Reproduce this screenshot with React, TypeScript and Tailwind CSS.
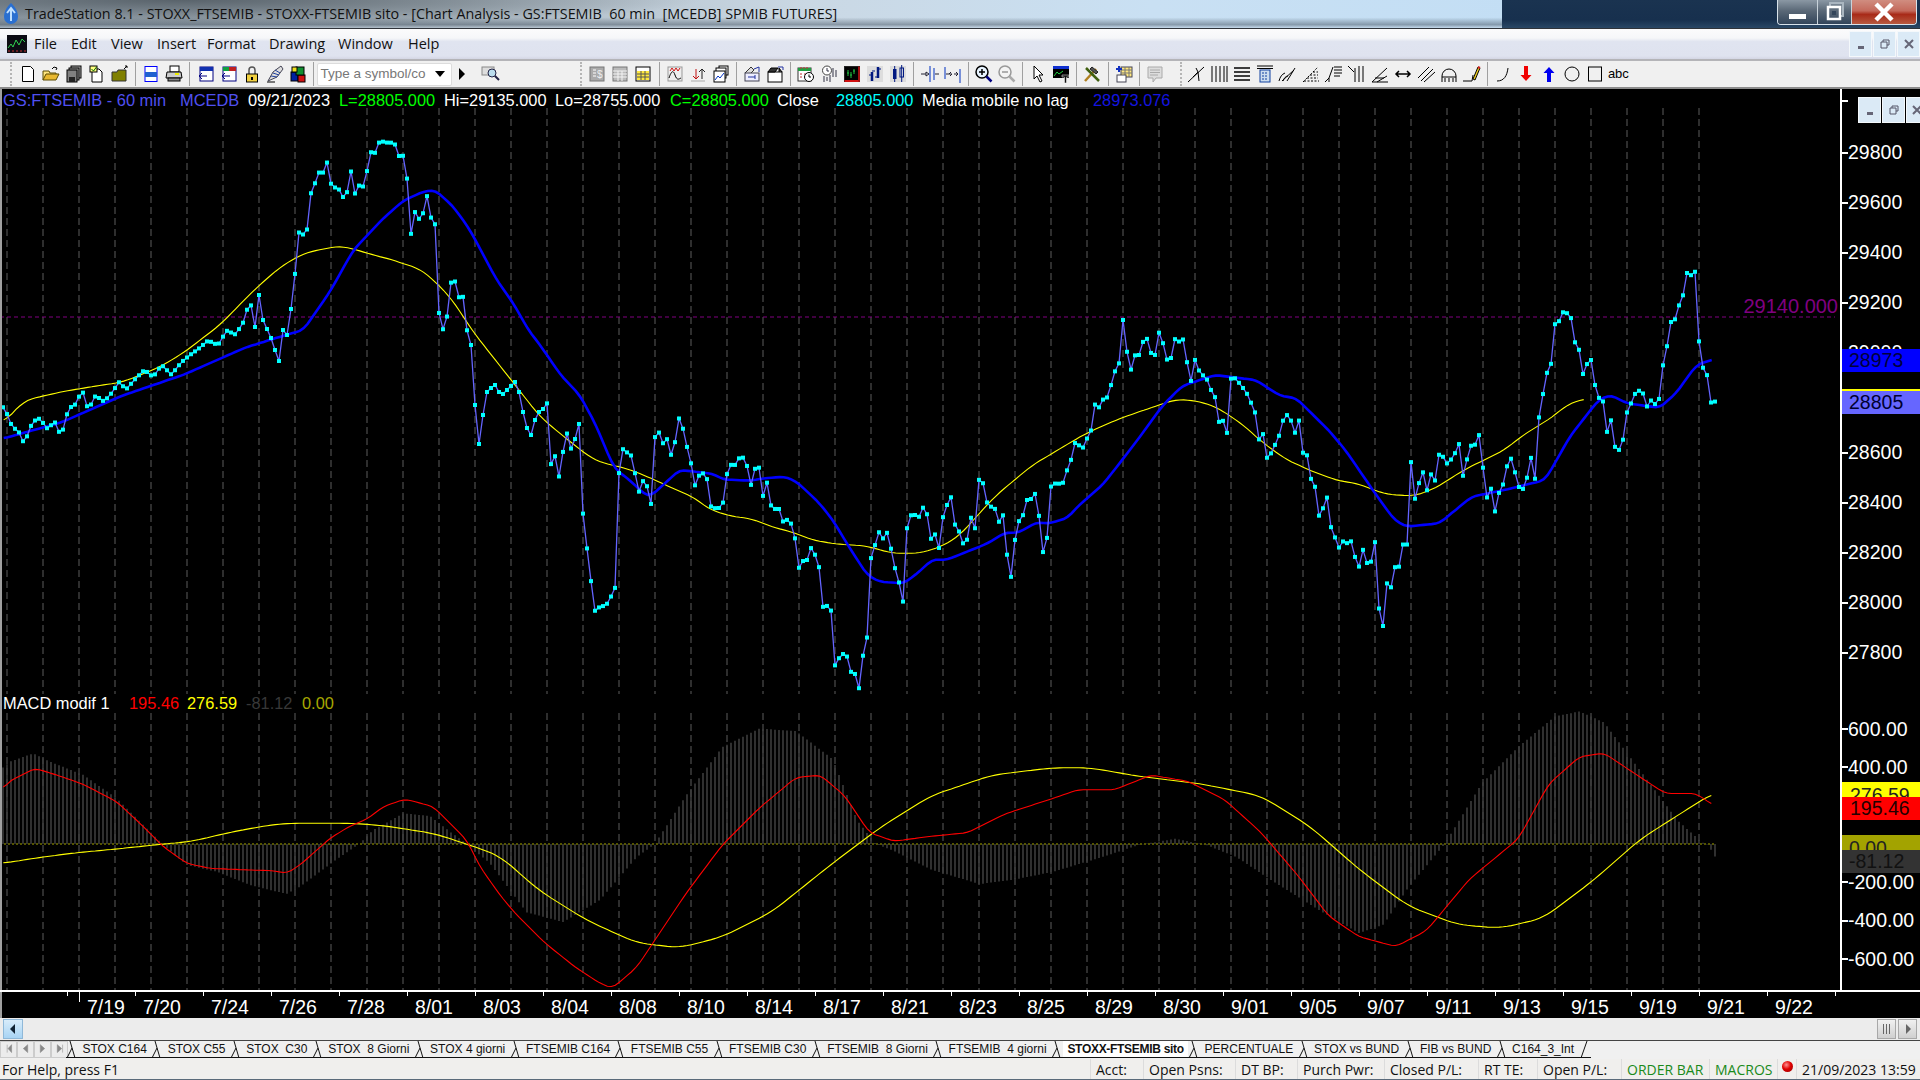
import type { ReactNode } from 'react';

type Pt = number[];

// curve data read off the picture, each group in the scale it was read at
const fromDisp = (p: Pt[]) => p.map(([x, y]) => [x * 1.2245, y * 1.2245]);
const fromTop = (p: Pt[]) => p.map(([x, y]) => [250 + x / 3, 130 + y / 3]);
const fromMid = (p: Pt[]) => p.map(([x, y]) => [540 + x / 2.904, 300 + y / 3]);
const fromEnd = (p: Pt[]) => p.map(([x, y]) => [1080 + x / 2.45, 260 + y / 3]);
const fromMacd = (p: Pt[]) => p.map(([x, y]) => [x / 3, 690 + y / 3]);

const priceRaw: Pt[] = [
  ...fromDisp([[2, 332], [5, 336], [8, 345], [12, 350], [15, 352], [20, 363], [24, 350], [27, 345], [30, 342], [33, 342], [38, 350], [42, 347], [45, 345], [50, 357], [54, 340], [57, 333], [62, 330], [67, 318], [72, 335], [78, 323], [85, 328], [92, 320], [97, 312], [103, 318], [110, 310], [118, 302], [125, 308], [132, 298], [140, 306], [148, 296], [155, 290], [162, 285], [170, 278], [178, 282], [185, 270], [192, 273], [198, 265]]),
  [250, 300], [255, 327], [259, 295], [263, 320], [267, 329], [271, 338], [275, 350], [279, 361], [283, 330], [287, 335], [291, 309],
  ...fromTop([[136, 423], [148, 297], [160, 315], [172, 297], [184, 180], [196, 158], [208, 125], [220, 128], [232, 95], [244, 167], [256, 173], [268, 179], [280, 203], [292, 185], [304, 119], [316, 197], [328, 164], [340, 170], [352, 119], [364, 62], [376, 69], [388, 35], [400, 35], [412, 38], [424, 38], [436, 44], [448, 81], [460, 77], [472, 152], [484, 326], [496, 239], [508, 269], [520, 248], [532, 194], [544, 269], [556, 284], [568, 573], [580, 600], [592, 556], [604, 449], [616, 455], [628, 506], [640, 500], [652, 610]]),
  [471, 345], [475, 405], [479, 444], [483, 415], [487, 392], [491, 388], [495, 385], [499, 392], [503, 394], [507, 390], [511, 386], [515, 382], [519, 392], [523, 412], [527, 428], [531, 435], [535, 420], [539, 412], [543, 409],
  ...fromMid([[21, 309], [33, 510], [44, 467], [56, 534], [68, 447], [79, 398], [91, 450], [102, 416], [114, 369], [126, 669], [137, 749], [149, 851], [161, 942], [172, 921], [184, 918], [195, 911], [207, 888], [219, 861], [230, 500], [242, 443], [254, 459], [265, 467], [277, 525], [289, 582], [300, 540], [312, 561], [323, 615], [335, 392], [346, 398], [358, 432], [370, 416], [381, 467], [393, 423], [405, 347], [416, 389], [428, 446], [439, 492], [451, 561], [463, 523], [474, 520], [486, 539], [498, 630], [509, 624], [521, 624], [532, 607], [544, 515], [556, 492], [567, 495], [579, 473], [591, 473], [602, 500], [614, 561], [625, 503], [637, 503], [648, 591], [660, 545], [672, 624], [683, 627], [695, 627], [707, 669], [718, 659], [730, 672], [741, 717], [753, 810], [765, 780], [776, 780], [788, 741], [799, 765], [811, 804], [823, 933], [834, 917], [846, 933], [857, 1101], [869, 1073], [881, 1061], [892, 1070], [904, 1119], [915, 1122], [927, 1167], [939, 1058], [950, 1011], [962, 758], [973, 735], [985, 695], [997, 717], [1008, 698], [1020, 749], [1032, 810], [1043, 849], [1055, 909], [1067, 659], [1078, 645], [1090, 645], [1102, 651], [1113, 621], [1125, 645], [1136, 720], [1148, 702], [1160, 749], [1171, 645], [1183, 612], [1194, 591], [1206, 680], [1218, 696], [1229, 732], [1241, 718], [1252, 651], [1264, 687], [1276, 524], [1287, 551], [1299, 612], [1311, 621], [1322, 627], [1334, 669], [1345, 645], [1357, 773], [1369, 837], [1380, 713], [1392, 659], [1403, 645], [1415, 597], [1427, 597], [1438, 581], [1450, 653], [1461, 759], [1473, 711], [1485, 545], [1496, 551], [1508, 551], [1520, 548], [1531, 509], [1543, 477], [1555, 423], [1566, 437]]),
  ...fromEnd([[8, 563], [18, 533], [28, 509], [38, 423], [47, 443], [57, 417], [67, 412], [76, 375], [86, 333], [96, 309], [106, 171], [116, 285], [125, 329], [135, 285], [145, 285], [155, 243], [165, 236], [174, 279], [184, 285], [194, 215], [204, 252], [214, 303], [223, 294], [233, 236], [243, 245], [253, 238], [263, 313], [272, 363], [282, 298], [292, 333], [302, 347], [312, 360], [321, 390], [331, 412], [341, 489], [351, 482], [361, 522], [370, 355], [380, 355], [390, 369], [400, 385], [410, 403], [420, 431], [429, 458], [439, 542], [449, 521], [459, 600], [468, 580], [478, 554], [488, 526], [498, 479], [508, 464], [517, 482], [527, 519], [537, 480], [547, 585], [557, 586], [566, 657], [576, 681], [586, 771], [596, 743], [606, 710], [615, 802], [625, 833], [635, 864], [645, 843], [655, 850], [664, 844], [674, 892], [684, 921], [694, 866], [703, 909], [713, 905], [723, 845], [733, 1055], [743, 1101], [752, 970], [762, 982], [772, 920], [782, 920], [792, 849], [802, 854], [811, 605], [821, 719], [831, 667], [841, 635], [851, 696], [861, 637], [871, 665], [880, 580], [890, 591], [900, 612], [910, 597], [919, 579], [929, 551], [939, 654], [949, 593], [958, 557], [968, 554], [978, 524], [988, 630], [998, 720], [1007, 686], [1017, 756], [1027, 696], [1037, 672], [1047, 614], [1056, 596], [1066, 638], [1076, 683], [1086, 687], [1096, 650], [1106, 587], [1116, 666], [1125, 462], [1135, 398], [1145, 333], [1155, 309], [1165, 176], [1174, 184], [1184, 155], [1194, 160], [1204, 176], [1214, 257], [1223, 270], [1233, 347], [1243, 309], [1253, 299], [1263, 386], [1272, 415], [1282, 425], [1292, 524], [1302, 476], [1311, 563], [1321, 570], [1331, 537], [1341, 450], [1351, 428], [1361, 398], [1370, 392], [1380, 401], [1390, 443], [1400, 419], [1410, 434], [1419, 416], [1429, 309], [1439, 254], [1449, 178], [1459, 178], [1468, 134], [1478, 104], [1488, 33], [1498, 47], [1507, 35], [1517, 254], [1527, 328], [1537, 347], [1547, 437], [1557, 423]]),
];

const yellowRaw: Pt[] = [
  ...fromDisp([[3, 345], [20, 327], [50, 320], [80, 315], [100, 312], [130, 300], [150, 288], [180, 265]]),
  ...fromTop([[0, 492], [40, 455], [90, 412], [130, 387], [175, 365], [210, 360], [250, 350], [285, 350], [320, 360], [370, 375], [430, 390], [470, 405], [505, 413], [550, 450], [600, 500], [640, 560], [665, 600]]),
  ...fromMid([[0, 350], [75, 415], [150, 475], [180, 488], [260, 508], [330, 538], [400, 572], [440, 588], [495, 630], [560, 650], [610, 655], [680, 683], [730, 695], [790, 720], [860, 732], [950, 738], [1010, 757], [1040, 760], [1100, 760], [1160, 742], [1215, 710], [1320, 590], [1430, 495], [1480, 465]]),
  ...fromEnd([[0, 530], [50, 500], [110, 470], [170, 445], [235, 418], [290, 423], [340, 445], [400, 495], [440, 540], [500, 595], [570, 635], [640, 665], [670, 667], [750, 703], [820, 708], [870, 685], [940, 630], [1040, 570], [1080, 530], [1165, 465], [1190, 435], [1240, 415]]),
];

const blueRaw: Pt[] = [
  ...fromDisp([[3, 358], [50, 345], [100, 323], [150, 306], [200, 284], [232, 274]]),
  ...fromTop([[160, 600], [240, 485], [310, 360], [400, 265], [460, 212], [520, 185], [555, 180], [610, 230], [660, 300], [740, 450], [790, 520], [835, 600]]),
  ...fromMid([[0, 135], [60, 225], [115, 285], [160, 370], [215, 505], [260, 540], [300, 580], [320, 590], [405, 510], [450, 515], [505, 522], [530, 538], [610, 542], [650, 535], [710, 530], [745, 545], [810, 608], [850, 660], [900, 745], [950, 825], [985, 845], [1055, 850], [1090, 825], [1140, 778], [1180, 780], [1240, 755], [1300, 730], [1350, 698], [1390, 698], [1445, 665], [1470, 672], [1530, 655]]),
  ...fromEnd([[0, 733], [55, 675], [100, 605], [150, 525], [200, 440], [250, 378], [330, 345], [430, 360], [490, 407], [530, 415], [610, 512], [650, 570], [720, 695], [770, 780], [800, 800], [880, 790], [960, 710], [1040, 690], [1140, 660], [1200, 530], [1270, 420], [1300, 405], [1340, 430], [1420, 443], [1460, 400], [1510, 315], [1555, 297]]),
];

const histRaw: Pt[] = [
  ...fromMacd([[0, 240], [30, 215], [100, 190], [150, 215], [250, 255], [350, 325], [420, 395], [490, 465], [560, 525], [650, 545], [750, 585], [860, 612], [900, 590], [1000, 515], [1080, 460], [1120, 420], [1210, 370], [1290, 378], [1350, 425], [1400, 462], [1470, 520], [1500, 560]]),
  ...fromDisp([[430, 745], [460, 753], [490, 735], [520, 700], [535, 689], [560, 650], [590, 610], [620, 595], [650, 597], [680, 620], [700, 670], [715, 689], [730, 695], [760, 710], [800, 722], [830, 718], [860, 712], [900, 700], [930, 690], [960, 685], [985, 690], [1010, 700], [1040, 720], [1080, 745], [1110, 762], [1130, 755], [1150, 725], [1180, 689], [1210, 640], [1240, 610], [1270, 585], [1290, 581], [1310, 590], [1340, 630], [1370, 670], [1390, 688], [1395, 690], [1402, 702]]),
];

const macdRed: Pt[] = [
  ...fromMacd([[10, 297], [25, 275], [105, 235], [170, 255], [250, 283], [350, 335], [420, 400], [490, 470], [560, 520], [630, 535], [750, 540], [820, 542], [860, 550], [900, 525], [990, 445], [1050, 408], [1100, 388], [1150, 350], [1215, 327], [1300, 350], [1400, 450], [1440, 530], [1500, 615]]),
  ...fromDisp([[420, 745], [445, 770], [470, 790], [490, 803], [500, 807], [520, 790], [560, 730], [590, 690], [620, 660], [650, 635], [670, 633], [690, 650], [710, 680], [730, 687], [760, 683], [790, 680], [820, 665], [860, 652], [880, 645], [910, 645], [940, 633], [970, 638], [1000, 653], [1030, 680], [1060, 715], [1085, 748], [1110, 765], [1140, 773], [1165, 760], [1200, 718], [1240, 685], [1265, 640], [1290, 618], [1310, 615], [1340, 635], [1360, 648], [1385, 648], [1400, 658]]),
];

const macdYellow: Pt[] = [
  ...fromMacd([[10, 520], [100, 505], [230, 488], [350, 477], [480, 463], [570, 455], [700, 425], [810, 405], [860, 400], [1060, 400], [1150, 407], [1300, 430], [1400, 462], [1500, 498]]),
  ...fromDisp([[440, 727], [480, 752], [520, 770], [555, 774], [590, 765], [630, 745], [680, 705], [720, 675], [760, 650], [810, 633], [860, 627], [890, 627], [930, 634], [980, 640], [1030, 650], [1070, 675], [1110, 710], [1150, 740], [1190, 755], [1225, 758], [1260, 750], [1300, 720], [1340, 685], [1400, 647]]),
];

function yAt(points: Pt[], x: number) {
  if (x <= points[0][0]) return points[0][1];
  for (let i = 1; i < points.length; i++) {
    const [x0, y0] = points[i - 1];
    const [x1, y1] = points[i];
    if (x <= x1) return x1 === x0 ? y1 : y0 + ((y1 - y0) * (x - x0)) / (x1 - x0);
  }
  return points[points.length - 1][1];
}

// the averages are smooth in the picture, the points above are sparse
function smooth(points: Pt[], r: number) {
  const out: Pt[] = [];
  const last = points[points.length - 1][0];
  for (let x = points[0][0]; x <= last; x += 4) {
    let sum = 0;
    for (let k = -r; k <= r; k++) sum += yAt(points, x + k * 4);
    out.push([x, sum / (2 * r + 1)]);
  }
  return out;
}

const barsX = Array.from({ length: 429 }, (_, i) => 3 + i * 4);
const gridX = Array.from({ length: 48 }, (_, i) => 7 + i * 36);
const priceBars = barsX.map((x) => [x, yAt(priceRaw, x)]);
const line = (p: Pt[]) => p.map(([x, y]) => `${x.toFixed(1)},${y.toFixed(1)}`).join(' ');

const priceLabels = ['29800', '29600', '29400', '29200', '29000', '28800', '28600', '28400', '28200', '28000', '27800'];
const macdLabels = ['600.00', '400.00', '200.00', '0.00', '-200.00', '-400.00', '-600.00'];
const dates = ['7/19', '7/20', '7/24', '7/26', '7/28', '8/01', '8/03', '8/04', '8/08', '8/10', '8/14', '8/17', '8/21', '8/23', '8/25', '8/29', '8/30', '9/01', '9/05', '9/07', '9/11', '9/13', '9/15', '9/19', '9/21', '9/22'];
const tabs = ['STOX C164', 'STOX C55', 'STOX  C30', 'STOX  8 Giorni', 'STOX 4 giorni', 'FTSEMIB C164', 'FTSEMIB C55', 'FTSEMIB C30', 'FTSEMIB  8 Giorni', 'FTSEMIB  4 giorni', 'STOXX-FTSEMIB sito', 'PERCENTUALE', 'STOX vs BUND', 'FIB vs BUND', 'C164_3_Int'];

const s = { fill: 'none', stroke: '#000' };

const icons: Record<string, ReactNode> = {
  newDoc: <path d="M4.5 2.5h8l3 3v12h-11z" fill="#fff" stroke="#000" />,
  open: <><path d="M2 16V7h6l1 2h6v2" fill="#ffe680" stroke="#5a4a00" /><path d="M2 16l3-6h13l-3 6z" fill="#e8b830" stroke="#5a4a00" /><path d="M11 5l2-2 3 1-1 2" {...s} /></>,
  saveAll: <><rect x="7" y="2" width="10" height="12" fill="#aaa" stroke="#000" /><rect x="5" y="4" width="10" height="12" fill="#999" stroke="#000" /><rect x="3" y="6" width="10" height="12" fill="#808080" stroke="#000" /><rect x="5" y="13" width="6" height="5" fill="#222" /></>,
  check: <><path d="M5 5h7l3 3v10H5z" fill="#fff" stroke="#000" /><rect x="3" y="2" width="7" height="6" fill="#ffff80" stroke="#000" /><path d="M4.5 5l2 2 3-4" stroke="#060" fill="none" /></>,
  folderUp: <><path d="M2 17V8h5l1-2h8v11z" fill="#808000" stroke="#333" /><path d="M14 5l3-3M15 2h2v2" stroke="#000" fill="none" /></>,
  preview: <><rect x="4" y="2.5" width="12" height="15" fill="#fff" stroke="#00f" /><rect x="4" y="8" width="12" height="5" fill="#2060d0" /></>,
  print: <><rect x="6" y="2" width="9" height="6" fill="#fff" stroke="#000" /><path d="M3 8h14l1 6H2z" fill="#ccc" stroke="#000" /><rect x="4" y="14" width="12" height="3" fill="#888" stroke="#000" /><rect x="11" y="9" width="4" height="2" fill="#ee0" /></>,
  win1: <><rect x="4" y="3" width="13" height="14" fill="#fff" stroke="#000080" /><rect x="4" y="3" width="13" height="4" fill="#1030b0" /><path d="M11 12H3M6 9l-3 3 3 3" stroke="#000080" fill="none" /></>,
  win2: <><rect x="4" y="3" width="13" height="14" fill="#fff" stroke="#000080" /><rect x="4" y="3" width="6" height="4" fill="#10a040" /><rect x="10" y="3" width="7" height="4" fill="#c02020" /><path d="M11 12H3M6 9l-3 3 3 3" stroke="#000080" fill="none" /></>,
  lock: <><path d="M7 10V6a3 3 0 0 1 6 0v4" fill="none" stroke="#555" strokeWidth="1.5" /><rect x="4.5" y="10" width="11" height="8" fill="#f0d040" stroke="#000" /><rect x="9" y="13" width="2" height="3" fill="#000" /></>,
  sat: <><path d="M3 17l5-9 8-6 2 3-6 8z" fill="#ddd" stroke="#445" /><path d="M6 12l6 1M8 9l6 2M10 6l5 3" stroke="#2040a0" /><path d="M2 18h8" stroke="#000" /></>,
  blocks: <><rect x="3" y="8" width="7" height="9" fill="#0020a0" stroke="#000" /><rect x="10" y="11" width="7" height="7" fill="#d01010" stroke="#000" /><rect x="8" y="3" width="8" height="8" fill="#109030" stroke="#000" /><rect x="4" y="3" width="5" height="5" fill="#f0e020" stroke="#000" /></>,
  calcGray: <><rect x="3" y="3" width="14" height="14" fill="#aaa" stroke="#777" /><path d="M6 6h3M6 9h3M6 12h3" stroke="#fff" /><text x="10" y="14" fontSize="10" fill="#eee">$</text></>,
  tableGray: <><rect x="3" y="3" width="14" height="14" fill="#bbb" stroke="#777" /><path d="M3 7h14M3 10h14M3 13h14M8 7v10M12 7v10" stroke="#f4f4f4" /></>,
  tableYellow: <><rect x="3" y="3" width="14" height="14" fill="#fff" stroke="#000" /><rect x="4" y="7" width="12" height="9" fill="#ffe840" /><path d="M4 10h12M4 13h12M8 7v9M12 7v9" stroke="#555" /></>,
  wave: <><rect x="3" y="3" width="14" height="14" fill="#eee" stroke="#999" /><path d="M4 14c2-6 4-9 6-3s4 4 6 3" stroke="#000" fill="none" /><path d="M5 7l2-3 2 3 2-3 2 3 2-3" stroke="#d01010" fill="none" /></>,
  updown: <><path d="M8 5v10M5 12l3 3 3-3" stroke="#c01010" fill="none" /><path d="M14 15V5M11 8l3-3 3 3" stroke="#222" fill="none" /><path d="M3 17h14" stroke="#aaa" /></>,
  chartStack: <><rect x="8" y="2" width="9" height="9" fill="#fff" stroke="#000" /><rect x="5" y="4" width="10" height="10" fill="#fff" stroke="#000" /><rect x="3" y="7" width="11" height="11" fill="#fff" stroke="#000" /><path d="M4 16l3-4 2 2 4-5" stroke="#0030c0" fill="none" /></>,
  docArrow: <><path d="M3 9l6-6 3 3-6 6z" fill="#ddd" stroke="#333" /><rect x="3" y="9" width="14" height="8" fill="#eef" stroke="#445" /><path d="M12 5l5-2v5M6 13h7M13 11v4" stroke="#2030a0" fill="none" /></>,
  docFolder: <><rect x="3" y="8" width="14" height="10" fill="#fff" stroke="#000" /><path d="M3 8l3-4h7l-3 4zM14 8V4l3 4" fill="#333" stroke="#000" /><path d="M13 3h5v3" stroke="#2030a0" fill="none" /></>,
  calendar: <><rect x="2" y="4" width="13" height="13" fill="#fff" stroke="#333" /><rect x="2" y="4" width="13" height="3" fill="#20a040" /><path d="M5 3v2M8 3v2M11 3v2" stroke="#c03030" /><path d="M4 10h2M8 10h2M4 13h2" stroke="#c03030" /><circle cx="13" cy="13" r="4.5" fill="#fff" stroke="#000" /><path d="M13 10.5V13h2" stroke="#000" fill="none" /></>,
  clockBars: <><circle cx="8" cy="6.5" r="4.5" fill="#fff" stroke="#444" /><path d="M8 4v3h2M5 12v6M8 13v4M11 11v7M14 4v9M17 6v7" stroke="#334" fill="none" /></>,
  blackChart: <><rect x="2.5" y="2.5" width="15" height="15" fill="#000" stroke="#222" /><rect x="2.5" y="16" width="15" height="2" fill="#d01010" /><rect x="16" y="2.5" width="2" height="15" fill="#a01010" /><path d="M6 6v6M9 8v6M12 5v5M5 9h2M8 11h2M11 7h2" stroke="#20c040" fill="none" /></>,
  barsA: <><rect x="2" y="2" width="16" height="16" fill="#ddd" /><path d="M7 8v9M13 3v11" stroke="#001880" strokeWidth="2.5" fill="none" /><path d="M4 11h3M7 7h3M10 13h3M13 5h3" stroke="#001880" fill="none" /></>,
  barsB: <><rect x="2" y="2" width="16" height="16" fill="#ddd" /><rect x="5" y="5" width="3.5" height="10" fill="#001880" /><path d="M6.7 2v16" stroke="#001880" /><rect x="12" y="4" width="3.5" height="9" fill="#eee" stroke="#001880" /><path d="M13.7 1v17" stroke="#001880" /></>,
  squeeze: <><path d="M10 2v16M14 4v12" stroke="#0030c0" fill="none" /><path d="M1 10h5M6 8l3 2-3 2zM19 10h-4" stroke="#223" fill="none" /></>,
  stretch: <><path d="M2 3v12M17 5v14" stroke="#0030c0" fill="none" /><path d="M3 10h3M9 10h-3l2-2M9 10l-2 2M11 10h4l-2-2M15 10l-2 2" stroke="#223" fill="none" /></>,
  zoomIn: <><circle cx="8" cy="8" r="6" fill="#e8f4ff" stroke="#000" strokeWidth="1.5" /><path d="M5 8h6M8 5v6" stroke="#000" strokeWidth="1.5" /><path d="M12.5 12.5l5 5" stroke="#000080" strokeWidth="2.5" /></>,
  zoomOut: <><circle cx="8" cy="8" r="6" fill="#f4f4f4" stroke="#999" strokeWidth="1.5" /><path d="M5 8h6" stroke="#999" strokeWidth="1.5" /><path d="M12.5 12.5l5 5" stroke="#aaa" strokeWidth="2.5" /></>,
  cursor: <path d="M6 2v13l3-3 3 6 2-1-3-6h4z" fill="#fff" stroke="#000" />,
  chartT: <><rect x="2" y="2" width="16" height="12" fill="#000" /><rect x="2" y="2" width="16" height="3" fill="#1030d0" /><path d="M3 12l3-4 2 2 4-3" stroke="#20d040" fill="none" /><path d="M11 11h7v2h-2.5v6h-2v-6H11z" fill="#111" stroke="#fff" strokeWidth="0.5" /></>,
  tools: <><path d="M3 17L14 5" stroke="#b08020" strokeWidth="2.5" /><path d="M10 3l6 5-2 2-6-5z" fill="#555" stroke="#222" /><path d="M4 4l13 13" stroke="#406010" strokeWidth="2.5" /></>,
  addTable: <><rect x="7" y="3" width="11" height="10" fill="#ffe880" stroke="#445" /><path d="M7 6h11M7 9h11M11 3v10M15 3v10" stroke="#777" /><path d="M5 2v6M2 5h6" stroke="#1030c0" strokeWidth="2" /><rect x="3" y="11" width="9" height="7" fill="#fff" stroke="#445" /></>,
  noteGray: <><path d="M3 3h14v11h-6l-3 4v-4H3z" fill="#ddd" stroke="#aaa" /><path d="M5 6h10M5 8.5h10M5 11h8" stroke="#aaa" /></>,
  fork: <path d="M2 18L18 3M7 13l5-5 1 9M12 8l-2-4" {...s} />,
  vlines: <path d="M3 2v16M7 2v16M11 2v16M15 2v16M18 2v16" stroke="#000" fill="none" />,
  hlines: <path d="M2 4h16M2 8h16M2 12h16M2 16h16" stroke="#000" strokeWidth="1.3" fill="none" />,
  calc: <><path d="M2 2h16M2 4.5h16" stroke="#000" /><rect x="5" y="6" width="10" height="12" fill="#cde" stroke="#1040a0" /><path d="M7 9h6M7 12h6M7 15h6" stroke="#1040a0" strokeDasharray="2 1" /></>,
  fan: <path d="M1 17c1-4 3-7 6-8M5 17c1-3 3-5 5-5M9 17l8-13M4 17l12-11" {...s} />,
  fib: <path d="M3 17h15M6 14h11M9 11h8M12 8h5M2 18L17 3" stroke="#000" strokeDasharray="2 1.5" fill="none" />,
  stair: <path d="M1 18l4-4v4M5 14l4-11M10 3h8M10 6h8M10 9h8M10 12h6" stroke="#000" fill="none" />,
  vlines2: <path d="M1 2l6 6M8 4v14M12 2v16M16 2v16" {...s} />,
  angle: <path d="M2 18h16M2 18L17 4M7 18l10-6M5 14h9" {...s} />,
  arrowLR: <path d="M3 10h14M6 7l-3 3 3 3M14 7l3 3-3 3" stroke="#000" strokeWidth="1.5" fill="none" />,
  parallel: <path d="M2 14L13 3M5 17L17 5M8 18L19 8" {...s} />,
  arch: <path d="M3 18v-6a7 7 0 0 1 14 0v6M6 18v-4M10 18v-4M14 18v-4M3 13h14" {...s} />,
  pencil: <><path d="M1 17h9M10 17l1-6" {...s} /><path d="M11 15l5-12 2 1-5 12z" fill="#f0d020" stroke="#000" /><path d="M16 3l2 1" stroke="#d02020" strokeWidth="2" /></>,
  curve: <path d="M4 17c7 0 10-5 11-13" {...s} />,
  down: <path d="M8 2h4v9h3.5L10 17l-5.5-6H8z" fill="#f00000" />,
  up: <path d="M8 18h4V9h3.5L10 3 4.5 9H8z" fill="#0000f0" />,
  circle: <circle cx="10" cy="10" r="7" {...s} />,
  rect: <rect x="3.5" y="3" width="13" height="14" {...s} />,
};

function Tool({ name }: { name: string }) {
  return (
    <div className="flex h-full w-[23px] items-center justify-center">
      <svg width="20" height="20" viewBox="0 0 20 20">{icons[name]}</svg>
    </div>
  );
}

function Group({ names }: { names: string[] }) {
  return (
    <>
      {names.map((n) => <Tool key={n} name={n} />)}
    </>
  );
}

function Sep() {
  return (
    <div className="flex h-full w-[8.3px] items-center justify-center">
      <div className="h-[24px] w-px bg-[#a0a0a0]" />
    </div>
  );
}

function Grip() {
  return <div className="h-[24px] w-0 border-l-2 border-dotted border-[#b5b5b5]" />;
}

function Toolbar() {
  return (
    <div className="flex h-[30px] items-center border-t-2 border-b-2 border-t-[#b4b4b8] border-b-[#8c8c8c] bg-[#f0f0f0] pl-[10px]">
      <Grip />
      <div className="w-[4.5px]" />
      <Group names={['newDoc', 'open', 'saveAll', 'check', 'folderUp']} />
      <Sep />
      <Group names={['preview', 'print']} />
      <Sep />
      <Group names={['win1', 'win2', 'lock', 'sat', 'blocks']} />
      <Sep />
      <div className="flex h-[23px] w-[135px] items-center rounded-[2px] border border-[#dcdcdc] bg-white pl-[2px] text-[13.5px] text-[#777]">
        <span className="flex-1">Type a symbol/co</span>
        <svg width="12" height="8" viewBox="0 0 12 8" className="mr-[5px]"><path d="M1 1h10L6 7z" fill="#000" /></svg>
      </div>
      <svg width="8" height="12" viewBox="0 0 8 12" className="ml-[6px]"><path d="M1 0l6 6-6 6z" fill="#000" /></svg>
      <svg width="20" height="20" viewBox="0 0 20 20" className="ml-[15px]">
        <rect x="1" y="3" width="12" height="8" fill="#ddd" stroke="#888" />
        <circle cx="11" cy="9" r="4" fill="#bde" stroke="#224" />
        <path d="M14 12l4 4" stroke="#224" strokeWidth="2" />
      </svg>
      <div className="w-[79px]" />
      <Grip />
      <div className="w-[3.5px]" />
      <Group names={['calcGray', 'tableGray', 'tableYellow']} />
      <Sep />
      <Group names={['wave', 'updown', 'chartStack']} />
      <Sep />
      <Group names={['docArrow', 'docFolder']} />
      <Sep />
      <Group names={['calendar', 'clockBars', 'blackChart', 'barsA', 'barsB']} />
      <Sep />
      <Group names={['squeeze', 'stretch']} />
      <Sep />
      <Group names={['zoomIn', 'zoomOut']} />
      <Sep />
      <Group names={['cursor', 'chartT']} />
      <Sep />
      <Group names={['tools']} />
      <Sep />
      <Group names={['addTable']} />
      <Sep />
      <Group names={['noteGray']} />
      <div className="w-[13px]" />
      <Grip />
      <div className="w-[3px]" />
      <Group names={['fork', 'vlines', 'hlines', 'calc', 'fan', 'fib', 'stair', 'vlines2', 'angle', 'arrowLR', 'parallel', 'arch', 'pencil']} />
      <Sep />
      <Group names={['curve', 'down', 'up', 'circle', 'rect']} />
      <div className="flex h-full w-[23px] items-center justify-center text-[13px] [font-stretch:75%]">abc</div>
    </div>
  );
}

function MdiButtons({ glyph }: { glyph: string }) {
  return (
    <div className="flex h-[26px] w-[23px] items-center justify-center border border-[#f4f8fb] bg-[#dbeaf6] text-[#556]">
      {glyph === 'min' && <div className="mt-[7px] h-[3px] w-[6px] bg-[#667]" />}
      {glyph === 'restore' && (
        <svg width="10" height="10" viewBox="0 0 10 10"><path d="M3 3V1h6v5H7M1 3h6v6H1z" fill="none" stroke="#556" /></svg>
      )}
      {glyph === 'close' && (
        <svg width="10" height="10" viewBox="0 0 10 10"><path d="M1 1l8 8M9 1l-8 8" stroke="#667" strokeWidth="2" /></svg>
      )}
    </div>
  );
}

function TitleBar() {
  return (
    <div className="flex h-[29px] border-b border-[#30343a] bg-[linear-gradient(90deg,#98a4ae_0%,#a9b5be_22%,#cad8e4_42%,#c9e0f3_60%,#bcdcf6_100%)]">
      <div className="relative flex flex-1 items-center bg-[linear-gradient(180deg,transparent_62%,rgba(70,85,100,0.5)_88%,rgba(200,215,230,0.4)_100%)] pl-[2px]">
        <div className="absolute inset-0 bg-[radial-gradient(ellipse_520px_26px_at_180px_0,#59636b,transparent)]" />
        <svg width="18" height="24" viewBox="0 0 18 24" className="relative">
          <path d="M9 1c5 5 7 9 7 14a7 7 0 0 1-14 0C2 10 4 6 9 1z" fill="#2a6fd0" />
          <path d="M9 6v13M5 11l4-5 4 5" stroke="#bfe0ff" strokeWidth="2" fill="none" />
        </svg>
        <span className="relative ml-[5px] whitespace-pre font-['Open_Sans',sans-serif] text-[14.35px] text-[#111]">
          {'TradeStation 8.1 - STOXX_FTSEMIB - STOXX-FTSEMIB sito - [Chart Analysis - GS:FTSEMIB  60 min  [MCEDB] SPMIB FUTURES]'}
        </span>
      </div>
      <div className="relative flex w-[418px] justify-end bg-[linear-gradient(180deg,#1a3350,#17304e_70%,#2a4866)] pr-[3px]">
        <div className="flex h-[25px] overflow-hidden rounded-b-[4px] border border-t-0 border-[#d8e2ea]">
          <div className="flex w-[39px] items-end justify-center bg-[linear-gradient(180deg,#8b98a4,#5a6877_45%,#33455a)] pb-[5px]">
            <div className="h-[5px] w-[17px] bg-white" />
          </div>
          <div className="flex w-[35px] items-center justify-center border-x border-[#c8d2da] bg-[linear-gradient(180deg,#8b98a4,#5a6877_45%,#33455a)]">
            <svg width="20" height="20" viewBox="0 0 20 20">
              <path d="M5 4V1h13v13h-3" fill="none" stroke="#aab6c0" strokeWidth="2" />
              <path d="M3 5h12v12H3z" fill="none" stroke="#fff" strokeWidth="2.5" />
              <rect x="7" y="9" width="4" height="4" fill="#33455a" />
            </svg>
          </div>
          <div className="flex w-[64px] items-center justify-center bg-[linear-gradient(180deg,#d08d80,#c46a5c_45%,#a82a18_60%,#b85a40)]">
            <svg width="24" height="20" viewBox="0 0 24 20"><path d="M4 2l16 16M20 2L4 18" stroke="#fff" strokeWidth="4.5" /></svg>
          </div>
        </div>
      </div>
    </div>
  );
}

function MenuBar() {
  const items = [['File', 'w-[37px]'], ['Edit', 'w-[40px]'], ['View', 'w-[46px]'], ['Insert', 'w-[50px]'], ['Format', 'w-[62px]'], ['Drawing', 'w-[69px]'], ['Window', 'w-[70px]'], ['Help', 'w-[40px]']];
  return (
    <div className="flex h-[30px] items-center bg-[linear-gradient(180deg,#fbfbfc_0%,#f6f7f9_30%,#e0e4f0_42%,#dfe3ef_90%,#d4d6e4_100%)] pl-[7px] pr-0">
      <svg width="20" height="18" viewBox="0 0 20 18">
        <rect width="20" height="18" fill="#0c0c14" />
        <path d="M1 13l3-4 2 3 3-7 3 5 3-6 3 3" stroke="#30d050" fill="none" />
        <path d="M1 16h18" stroke="#c03030" strokeDasharray="2 2" />
      </svg>
      <div className="ml-[7px] flex font-['Open_Sans',sans-serif] text-[14.5px] text-[#111]">
        {items.map(([label, w]) => <div key={label} className={w}>{label}</div>)}
      </div>
      <div className="flex-1" />
      <div className="flex gap-px">
        <MdiButtons glyph="min" />
        <MdiButtons glyph="restore" />
        <MdiButtons glyph="close" />
      </div>
    </div>
  );
}

function ChartSvg() {
  return (
    <svg width="1840" height="901" viewBox="0 89 1840 901" className="block">
      {gridX.map((x) => (
        <g key={x} stroke="#5c5c5c" strokeDasharray="7 4">
          <line x1={x} x2={x} y1="108" y2="694" />
          <line x1={x} x2={x} y1="713" y2="990" />
        </g>
      ))}
      <line x1="0" x2="1835" y1="317" y2="317" stroke="#800080" strokeDasharray="4 3" />
      <polyline points={line(smooth(yellowRaw, 2))} fill="none" stroke="#ffff00" strokeWidth="1.1" />
      <polyline points={line(smooth(blueRaw, 1))} fill="none" stroke="#0000ff" strokeWidth="2.6" />
      <polyline points={line(priceBars)} fill="none" stroke="#6464ff" strokeWidth="1.3" />
      {priceBars.map(([x, y]) => <rect key={x} x={x - 2} y={y - 2} width="4" height="4" fill="#00ffff" />)}

      {barsX.map((x) => <line key={x} x1={x} x2={x} y1="844" y2={yAt(histRaw, x)} stroke="#3c3c3c" strokeWidth="1.6" />)}
      <line x1="0" x2="1716" y1="844" y2="844" stroke="#a8a800" strokeDasharray="2 2" />
      <polyline points={line(smooth(macdYellow, 3))} fill="none" stroke="#ffff00" strokeWidth="1.1" />
      <polyline points={line(smooth(macdRed, 1))} fill="none" stroke="#ff0000" strokeWidth="1.1" />
    </svg>
  );
}

function PlotArea() {
  const legend = [
    ['GS:FTSEMIB - 60 min', 'w-[177px] text-[#5050f0]'],
    ['MCEDB', 'w-[68px] text-[#5050f0]'],
    ['09/21/2023', 'w-[91px] text-white'],
    ['L=28805.000', 'w-[105px] text-[#00ff00]'],
    ['Hi=29135.000', 'w-[111px] text-white'],
    ['Lo=28755.000', 'w-[115px] text-white'],
    ['C=28805.000', 'w-[107px] text-[#00ff00]'],
    ['Close', 'w-[59px] text-white'],
    ['28805.000', 'w-[86px] text-[#00ffff]'],
    ['Media mobile no lag', 'w-[171px] text-white'],
    ['28973.076', 'text-[#1414e0]'],
  ];
  const macdLegend = [
    ['MACD modif 1', 'w-[126px] text-white'],
    ['195.46', 'w-[58px] text-[#ff0000]'],
    ['276.59', 'w-[59px] text-[#ffff00]'],
    ['-81.12', 'w-[56px] text-[#383838]'],
    ['0.00', 'text-[#a8a800]'],
  ];
  return (
    <div className="relative w-[1840px] flex-none border-l-0">
      <ChartSvg />
      <div className="absolute left-[3px] top-[2px] flex h-[19px] items-center text-[16.4px]">
        {legend.map(([t, c]) => <span key={t} className={c + ' whitespace-pre'}>{t}</span>)}
      </div>
      <div className="absolute left-[3px] top-[605px] flex h-[19px] items-center text-[16.4px]">
        {macdLegend.map(([t, c]) => <span key={t} className={c + ' whitespace-pre'}>{t}</span>)}
      </div>
      <div className="absolute right-[2px] top-[205px] text-[20px] leading-[24px] text-[#800080]">29140.000</div>
      <div className="absolute inset-y-0 left-0 w-[2px] bg-[#a0a0a0]" />
    </div>
  );
}

function AxisRow({ label, h }: { label: string; h: string }) {
  return (
    <div className={'flex items-center ' + h}>
      <div className="h-[2px] w-[6px] bg-white" />
      <span className="text-[19.5px] text-white">{label}</span>
    </div>
  );
}

function PriceAxis() {
  return (
    <div className="relative w-[80px] flex-none border-l-2 border-white">
      <div className="mt-[11px] h-[2px] w-[6px] bg-white" />
      <div className="mt-[26px]">
        {priceLabels.map((p) => <AxisRow key={p} label={p} h="h-[50px]" />)}
      </div>
      <div className="mt-[32px]">
        {macdLabels.map((p) => <AxisRow key={p} label={p} h="h-[38.33px]" />)}
      </div>

      <div className="absolute inset-x-0 top-[260px] flex h-[23px] items-center bg-[#0000ff] pl-[7px] text-[19.5px] text-[#00003a]">28973</div>
      <div className="absolute inset-x-0 top-[300px] h-[2px] bg-[#ffff00]" />
      <div className="absolute inset-x-0 top-[302px] flex h-[23px] items-center bg-[#6666ff] pl-[7px] text-[19.5px] text-[#000030]">28805</div>
      <div className="absolute inset-x-0 top-[693px] h-[15px] overflow-hidden bg-[#ffff00] pl-[8px] text-[19.5px] leading-[26px] text-[#222]">276.59</div>
      <div className="absolute inset-x-0 top-[708px] flex h-[23px] items-center bg-[#ff0000] pl-[8px] text-[19.5px] text-[#220000]">195.46</div>
      <div className="absolute inset-x-0 top-[746px] h-[15px] overflow-hidden bg-[#a3a300] pl-[7px] text-[19.5px] leading-[26px] text-[#222]">0.00</div>
      <div className="absolute inset-x-0 top-[761px] flex h-[23px] items-center bg-[#333] pl-[7px] text-[19.5px] text-[#111]">-81.12</div>

      <div className="absolute right-0 top-[8px] flex gap-px">
        <div className="flex h-[26px] w-[23px] items-end justify-center border border-[#f4f8fb] bg-[#dbeaf6] pb-[7px]"><div className="h-[3px] w-[6px] bg-[#667]" /></div>
        <div className="flex h-[26px] w-[23px] items-center justify-center border border-[#f4f8fb] bg-[#dbeaf6]">
          <svg width="10" height="10" viewBox="0 0 10 10"><path d="M3 3V1h6v5H7M1 3h6v6H1z" fill="none" stroke="#556" /></svg>
        </div>
        <div className="flex h-[26px] w-[14px] items-center overflow-hidden border border-r-0 border-[#f4f8fb] bg-[#dbeaf6] pl-[5px]">
          <svg width="10" height="10" viewBox="0 0 10 10" className="flex-none"><path d="M1 1l8 8M9 1l-8 8" stroke="#667" strokeWidth="2" /></svg>
        </div>
      </div>
    </div>
  );
}

function DateAxis() {
  return (
    <div className="relative flex h-[28px] border-t-2 border-white pl-[67px]">
      <div className="absolute left-[79px] top-0 h-[10px] w-px bg-white" />
      <div className="absolute inset-y-0 left-0 w-[2px] bg-[#a0a0a0]" />
      {dates.map((d, i) => (
        <div key={d} className={(i === 0 ? 'pl-[20px] ' : 'pl-[8px] ') + 'relative w-[68px] flex-none pt-[3px] text-[19.5px] leading-[24px] text-white'}>
          <div className="absolute left-0 top-0 h-[4px] w-px bg-white" />
          {d}
        </div>
      ))}
      <div className="relative">
        <div className="absolute left-0 top-0 h-[4px] w-px bg-white" />
      </div>
    </div>
  );
}

function ScrollRow() {
  return (
    <div className="flex h-[22px] items-center justify-between bg-[#ececec] pl-[3px] pr-[3px]">
      <div className="flex h-[20px] w-[20px] items-center justify-center border border-[#8fb8d8] bg-[linear-gradient(180deg,#d8ecfa,#a8d4f4)]">
        <svg width="6" height="10" viewBox="0 0 6 10"><path d="M5 0L0 5l5 5z" fill="#123" /></svg>
      </div>
      <div className="flex gap-[2px]">
        <div className="flex h-[20px] w-[19px] items-center justify-center border border-[#a8a8a8] bg-[linear-gradient(180deg,#f0f0f0,#d0d0d0)]">
          <svg width="9" height="10" viewBox="0 0 9 10"><path d="M1.5 0v10M4.5 0v10M7.5 0v10" stroke="#666" /></svg>
        </div>
        <div className="flex h-[20px] w-[19px] items-center justify-center border border-[#a8a8a8] bg-[linear-gradient(180deg,#f0f0f0,#d0d0d0)]">
          <svg width="6" height="10" viewBox="0 0 6 10"><path d="M1 0l5 5-5 5z" fill="#666" /></svg>
        </div>
      </div>
    </div>
  );
}

function TabEdge({ last }: { last?: boolean }) {
  return (
    <svg width="12" height="17" viewBox="0 0 12 17" className="flex-none">
      <path d={last ? 'M2 17L8 0' : 'M4 0l5 17M1 17l5-10'} fill="none" stroke="#111" />
    </svg>
  );
}

function TabRow() {
  return (
    <div className="flex h-[19px] border-t border-[#444] bg-[#f0f0f0] text-[12px] text-[#111]">
      <div className="flex h-[17px] w-[66px] flex-none">
        {['M7 3v9M12 3L8 7.5l4 4.5z', 'M11 3L6 7.5l5 4.5z', 'M6 3l5 4.5L6 12z', 'M12 3v9M6 3l5 4.5L6 12z'].map((d) => (
          <svg key={d} width="17" height="17" viewBox="0 0 17 17" className="flex-none border border-[#ccc] bg-[#ececec]">
            <path d={d} fill="#888" stroke="#888" strokeWidth="0.6" />
          </svg>
        ))}
      </div>
      <div className="flex h-[17px] items-center border-b border-[#111]">
        {tabs.map((t) => {
          const active = t === 'STOXX-FTSEMIB sito';
          return (
            <div key={t} className="flex h-full items-center">
              <TabEdge />
              <div className={(active ? 'bg-white font-bold tracking-[-0.3px] ' : '') + 'flex h-full items-center whitespace-pre px-[4.4px]'}>{t}</div>
            </div>
          );
        })}
        <TabEdge last />
      </div>
    </div>
  );
}

function StatusBar() {
  const cells = [
    ['Acct:', 'w-[53px] text-[#111]'],
    ['Open Psns:', 'w-[92px] text-[#111]'],
    ['DT BP:', 'w-[62px] text-[#111]'],
    ['Purch Pwr:', 'w-[87px] text-[#111]'],
    ['Closed P/L:', 'w-[94px] text-[#111]'],
    ['RT TE:', 'w-[59px] text-[#111]'],
    ['Open P/L:', 'w-[84px] text-[#111]'],
    ['ORDER BAR', 'w-[88px] text-[#1a8a1a]'],
    ['MACROS', 'w-[68px] text-[#1a8a1a]'],
  ];
  return (
    <div className="flex h-[21px] items-center border-b border-[#5a6a7a] bg-[#f0efed] font-['Open_Sans',sans-serif] text-[14px]">
      <div className="flex-1 pl-[2px] text-[#111]">For Help, press F1</div>
      {cells.map(([t, c]) => (
        <div key={t} className={c + ' flex h-full items-center whitespace-nowrap border-l border-[#dcdcdc] pl-[5px]'}>{t}</div>
      ))}
      <div className="flex h-full w-[19px] items-start justify-center border-l border-[#dcdcdc] pt-[2px]">
        <div className="h-[11px] w-[11px] rounded-full bg-[radial-gradient(circle_at_40%_35%,#ff9090,#e00000_45%,#900000)]" />
      </div>
      <div className="flex h-full w-[124px] items-center whitespace-nowrap border-l border-[#dcdcdc] pl-[5px] text-[#111]">21/09/2023 13:59</div>
    </div>
  );
}

export default function App() {
  return (
    <div className="flex h-[1080px] w-[1920px] flex-col overflow-hidden bg-black font-['Liberation_Sans',Arial,sans-serif]">
      <TitleBar />
      <MenuBar />
      <Toolbar />
      <div className="flex h-[901px] flex-none bg-black">
        <PlotArea />
        <PriceAxis />
      </div>
      <DateAxis />
      <ScrollRow />
      <TabRow />
      <StatusBar />
    </div>
  );
}
